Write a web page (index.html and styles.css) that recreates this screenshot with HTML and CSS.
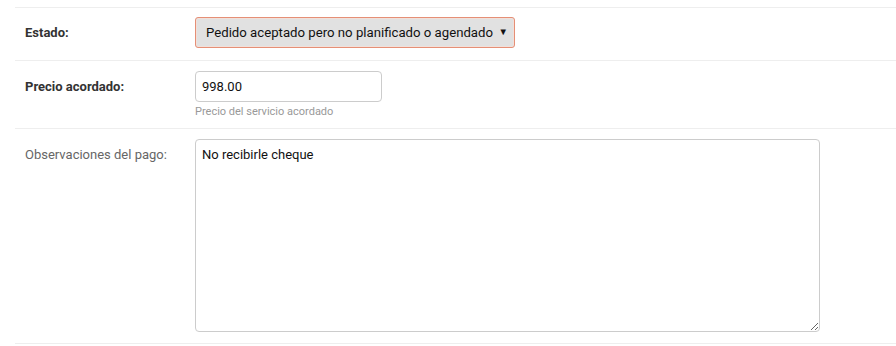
FILE: index.html
```html
<!DOCTYPE html>
<html lang="es">
<head>
<meta charset="utf-8">
<title>Pedido</title>
<link rel="stylesheet" href="styles.css">
</head>
<body>
<form class="form">
  <fieldset class="module">
    <div class="form-row row-select">
      <label class="required" for="estado">Estado:</label>
      <div class="select-wrap">
        <select id="estado" class="select">
          <option>Pedido aceptado pero no planificado o agendado</option>
        </select>
        <span class="arrow">▼</span>
      </div>
    </div>
    <div class="form-row row-input">
      <label class="required" for="precio">Precio acordado:</label>
      <div class="field">
        <input id="precio" class="input" type="text" value="998.00">
        <div class="help">Precio del servicio acordado</div>
      </div>
    </div>
    <div class="form-row row-textarea">
      <label for="obs">Observaciones del pago:</label>
      <textarea id="obs" class="textarea">No recibirle cheque</textarea>
    </div>
  </fieldset>
</form>
</body>
</html>
```
FILE: styles.css
```css
html, body {
  margin: 0;
  padding: 0;
  background: #fff;
}
body {
  font-family: Roboto, "Liberation Sans", sans-serif;
  font-size: 13px;
  color: #333;
  padding-top: 7px;
  padding-left: 15px;
}
.form {
  margin: 0;
}
.module {
  margin: 0;
  padding: 0;
  border: 0;
  border-top: 1px solid #eee;
}
.form-row {
  display: flex;
  align-items: flex-start;
  padding: 10px 10px 11px 10px;
  border-bottom: 1px solid #eee;
}
.row-select {
  padding-top: 9px;
  padding-bottom: 12px;
}
.row-input {
  padding-bottom: 9px;
}
label {
  width: 160px;
  padding-right: 10px;
  padding-top: 8px;
  line-height: 16px;
  color: #666;
  flex: none;
}
label.required {
  color: #333;
  font-weight: bold;
}
.select-wrap {
  position: relative;
  width: 320px;
  height: 31px;
}
.select {
  -webkit-appearance: none;
  appearance: none;
  width: 320px;
  height: 31px;
  margin: 0;
  box-sizing: border-box;
  border: 1px solid #e58f76;
  box-shadow: inset 0 0 0 1px #f1e0da;
  border-radius: 3px;
  background: #e1e1e1;
  font-family: Roboto, "Liberation Sans", sans-serif;
  font-size: 13.2px;
  color: #111;
  padding: 0 12px 0 10px;
  outline: none;
}
.arrow {
  position: absolute;
  right: 7px;
  top: 10px;
  font-size: 9.5px;
  line-height: 10px;
  color: #111;
  pointer-events: none;
}
.field {
  display: flex;
  flex-direction: column;
}
.input {
  width: 187px;
  height: 31px;
  margin: 0;
  box-sizing: border-box;
  border: 1px solid #ccc;
  border-radius: 4px;
  padding: 5px 6px;
  font-family: Roboto, "Liberation Sans", sans-serif;
  font-size: 13px;
  color: #111;
  outline: none;
}
.help {
  font-size: 11px;
  color: #999;
  line-height: 14px;
  margin-top: 3px;
}
.textarea {
  width: 625px;
  height: 193px;
  margin: 0;
  box-sizing: border-box;
  border: 1px solid #ccc;
  border-radius: 4px;
  padding: 7px 6px;
  font-family: Roboto, "Liberation Sans", sans-serif;
  font-size: 13px;
  line-height: 16px;
  color: #111;
  outline: none;
  resize: both;
}
```
